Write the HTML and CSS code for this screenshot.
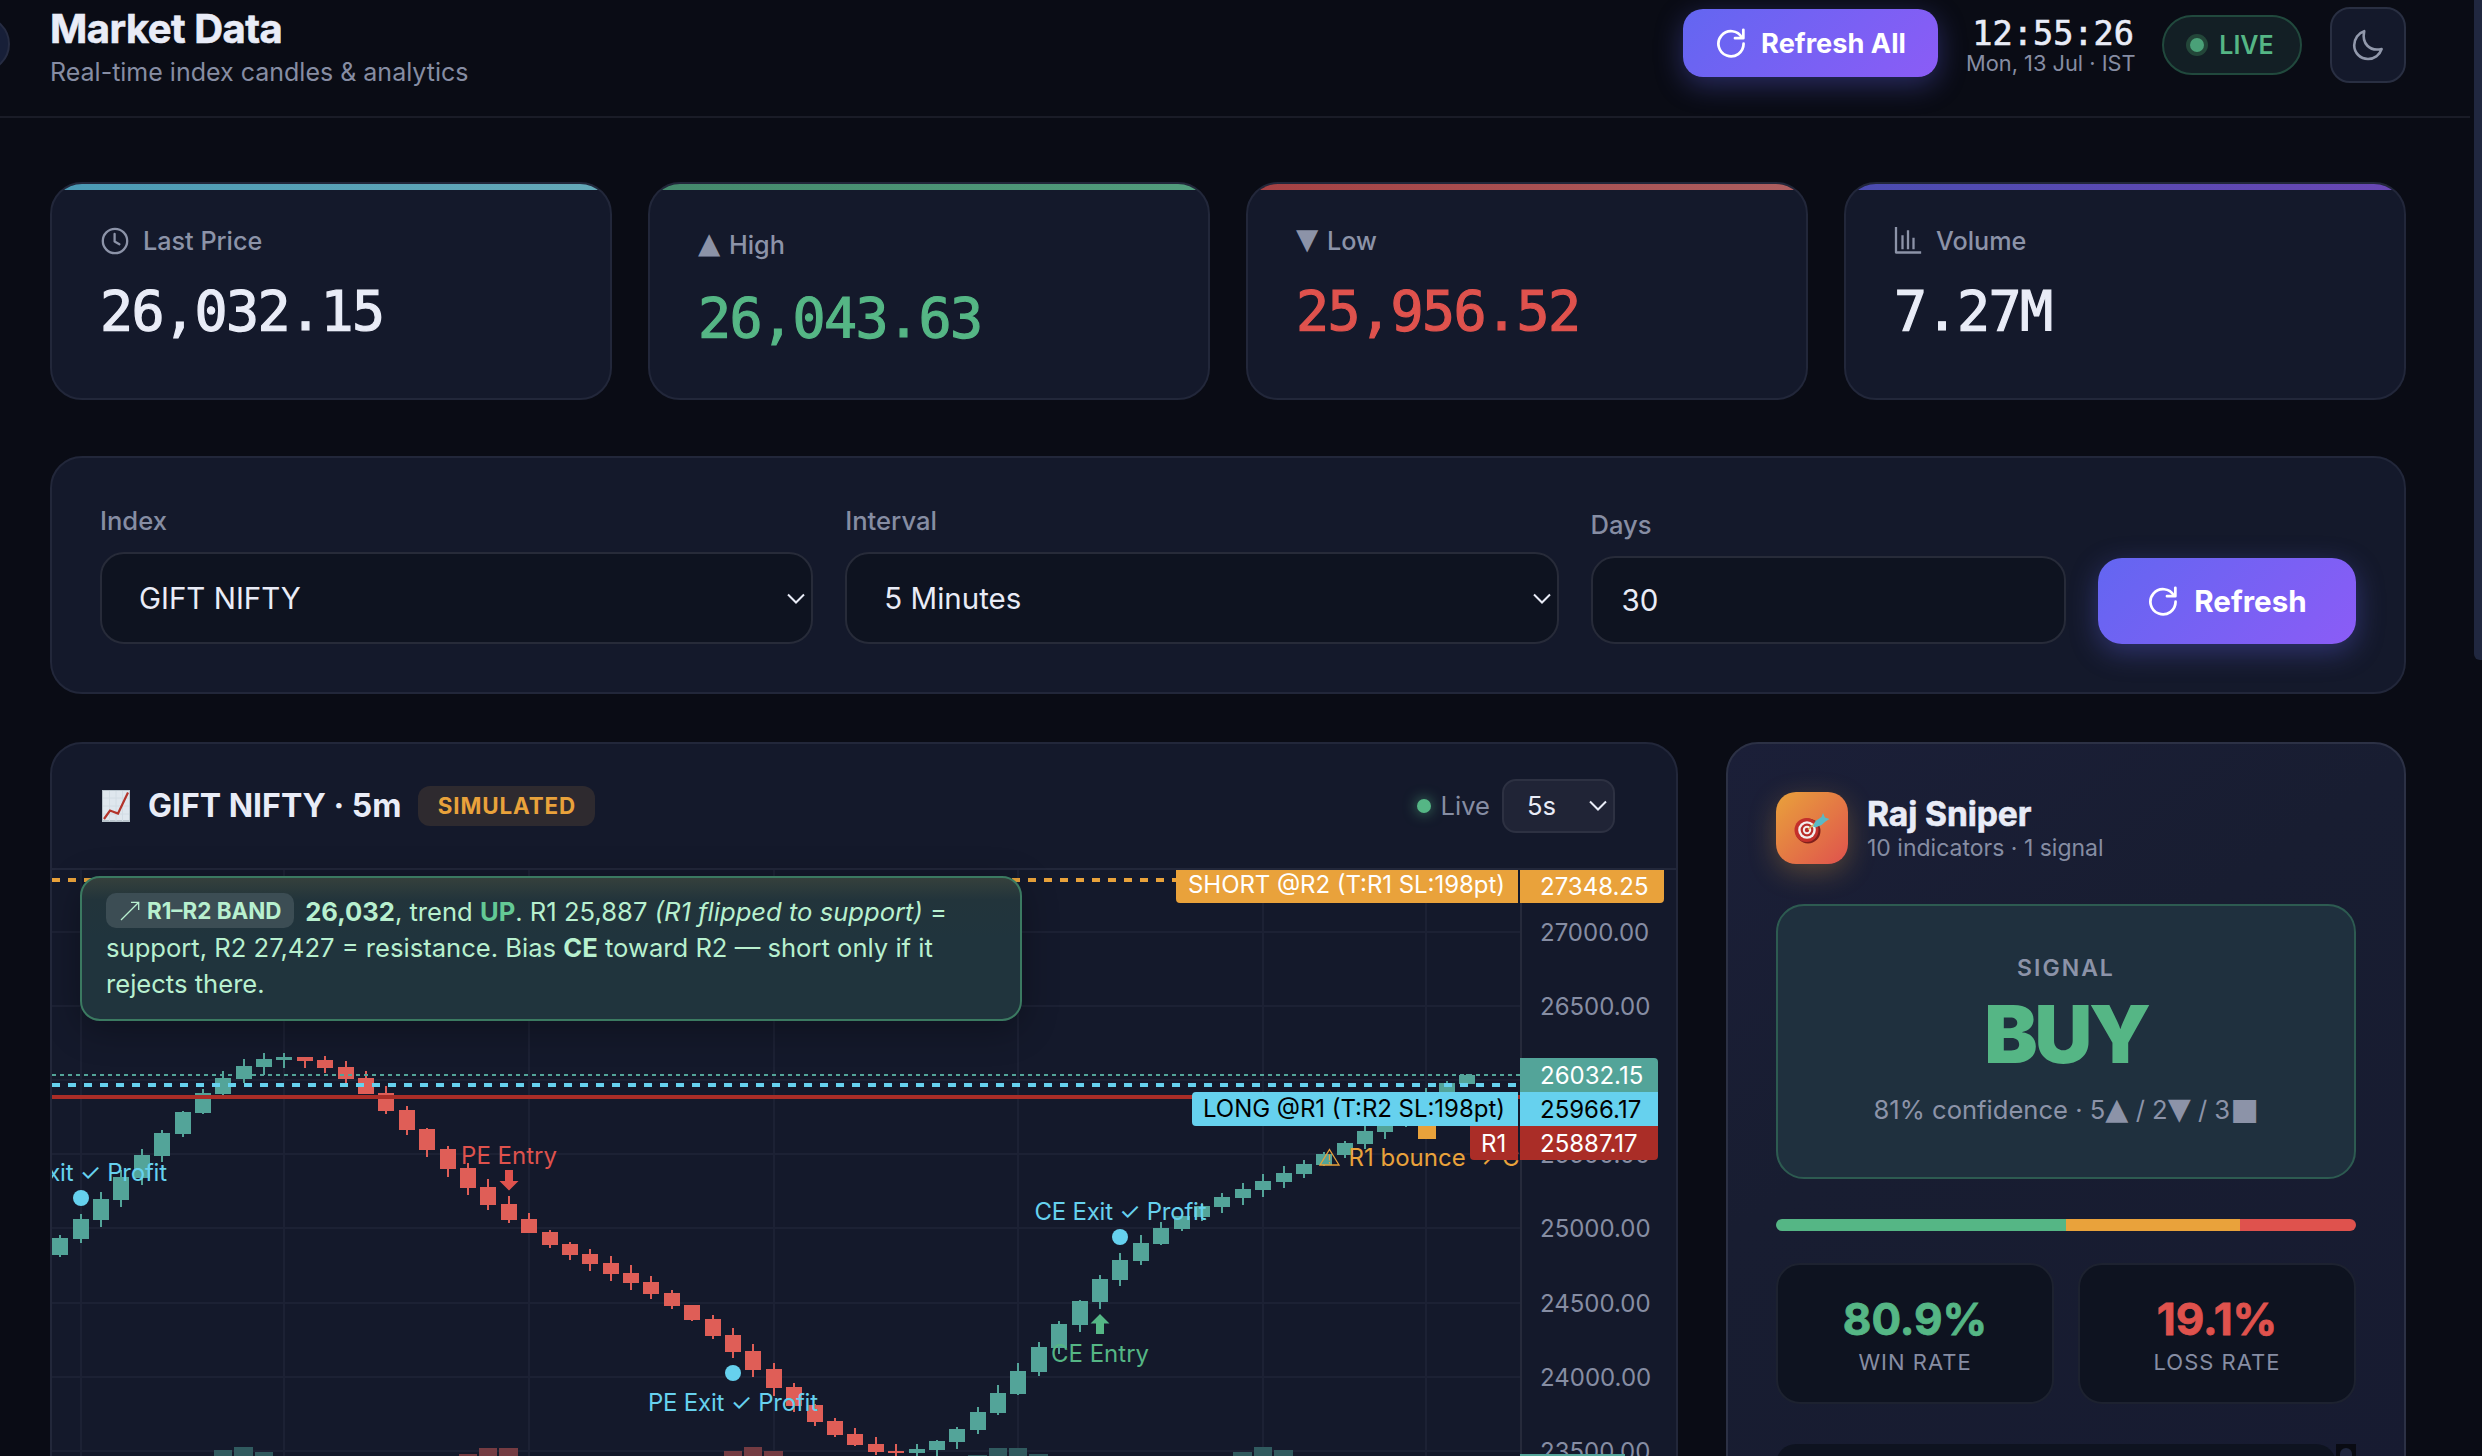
FILE: index.html
```html
<!DOCTYPE html>
<html lang="en">
<head>
  <meta charset="UTF-8" />
  <title>Market Data</title>
  <link rel="stylesheet" href="styles.css">
</head>
<body>
  <button class="sidebar-toggle" aria-label="Toggle sidebar"></button>
  <div class="page-scrollbar"></div>

  <header class="topbar">
    <div class="topbar-title">
      <h1>Market Data</h1>
      <p>Real-time index candles &amp; analytics</p>
    </div>
    <div class="topbar-actions">
      <button class="btn btn-all">
        <svg class="ico" viewBox="0 0 28 28"><path d="M23.6 9.3A11 11 0 1 0 25 14.6"/><path d="M24.8 2.5v7.3h-7.3"/></svg>
        <span>Refresh All</span>
      </button>
      <div class="clock">
        <div class="clock-time">12:55:26</div>
        <div class="clock-date">Mon, 13 Jul · IST</div>
      </div>
      <div class="live-pill"><i></i><span>LIVE</span></div>
      <button class="theme-btn" aria-label="Theme">
        <svg viewBox="0 0 32 32"><path d="M12.2 2.2C9.7 14.5 17.5 22.7 29.6 20C27.5 26.3 22 30 16 30C8.3 30 2.2 24 2.2 16.3C2.2 9.6 6.4 4 12.2 2.2Z"/></svg>
      </button>
    </div>
  </header>

  <main class="content">
    <section class="stats">
      <div class="card stat stat-price">
        <div class="stat-label">
          <svg viewBox="0 0 28 28"><circle cx="14" cy="14" r="12.2"/><path d="M13.6 7v7.6l4.8 2.7"/></svg>
          <span>Last Price</span>
        </div>
        <div class="stat-value">26,032.15</div>
      </div>
      <div class="card stat stat-high">
        <div class="stat-label"><span class="tri">▲</span><span>High</span></div>
        <div class="stat-value">26,043.63</div>
      </div>
      <div class="card stat stat-low">
        <div class="stat-label"><span class="tri">▼</span><span>Low</span></div>
        <div class="stat-value">25,956.52</div>
      </div>
      <div class="card stat stat-volume">
        <div class="stat-label">
          <svg class="bars" viewBox="0 0 28 28"><path d="M2 1v24.5h24"/><path d="M8.5 9.5v11.5M14 4.5v16.5M19.5 12v9"/></svg>
          <span>Volume</span>
        </div>
        <div class="stat-value">7.27M</div>
      </div>
    </section>

    <section class="card filters">
      <div class="field">
        <label>Index</label>
        <div class="control control-select"><span>GIFT NIFTY</span><svg viewBox="0 0 18 11"><path d="M1 1.5l8 8 8-8"/></svg></div>
      </div>
      <div class="field">
        <label>Interval</label>
        <div class="control control-select"><span>5 Minutes</span><svg viewBox="0 0 18 11"><path d="M1 1.5l8 8 8-8"/></svg></div>
      </div>
      <div class="field">
        <label>Days</label>
        <div class="control control-input"><span>30</span></div>
      </div>
      <button class="btn btn-refresh">
        <svg class="ico" viewBox="0 0 28 28"><path d="M23.6 9.3A11 11 0 1 0 25 14.6"/><path d="M24.8 2.5v7.3h-7.3"/></svg>
        <span>Refresh</span>
      </button>
    </section>

    <section class="main-grid">
      <div class="card chart-card">
        <div class="chart-head">
          <div class="chart-title">
            <svg class="chart-emoji" viewBox="0 0 28 32">
              <rect width="28" height="32" fill="#b9c4cc"/>
              <rect x="1" y="1" width="26" height="29" fill="#dfe7ee"/>
              <path d="M7.5 1v30M14 1v30M20.5 1v30M1 8h26M1 16h26M1 24h26" stroke="#d2dce4" fill="none"/>
              <path d="M2 29l6-8.5 8 3 10-21" fill="none" stroke="#b3352c" stroke-width="2.2"/>
            </svg>
            <h2>GIFT NIFTY · 5m</h2>
            <span class="badge-sim">SIMULATED</span>
          </div>
          <div class="chart-live">
            <i></i><span>Live</span>
            <div class="mini-select"><span>5s</span><svg viewBox="0 0 18 11"><path d="M1 1.5l8 8 8-8"/></svg></div>
          </div>
        </div>
        <div class="chart-area">
          <svg class="chart" id="chart" viewBox="52 870 1624 586" width="1624" height="586">
            <defs><clipPath id="pane"><rect x="52" y="870" width="1468" height="586"/></clipPath></defs>
            <g id="grid" class="grid"></g>
            <g clip-path="url(#pane)">
              <g id="volume"></g>
              <g id="candles"></g>
              <path class="line-last" d="M52 1075H1520"/>
              <path class="line-short" d="M52 880H1520"/>
              <path class="line-long" d="M52 1085H1520"/>
              <path class="line-r1" d="M52 1097H1520"/>
              <g class="marks">
                <g class="m-exit">
                  <circle cx="81" cy="1198" r="8"/><text x="81" y="1181" textLength="172">CE Exit ✓ Profit</text>
                  <circle cx="733" cy="1373" r="8"/><text x="733" y="1411" textLength="170">PE Exit ✓ Profit</text>
                  <circle cx="1120" cy="1237" r="8"/><text x="1120.5" y="1220" textLength="172">CE Exit ✓ Profit</text>
                </g>
                <g class="m-pe">
                  <path d="M505 1170h8v11h5.5l-9.5 9.5-9.5-9.5h5.5z"/><text x="509" y="1163.5">PE Entry</text>
                </g>
                <g class="m-ce">
                  <path d="M1096 1334h8v-10.5h5.5l-9.5-9.5-9.5 9.5h5.5z"/><text x="1100" y="1362">CE Entry</text>
                </g>
                <g class="m-warn">
                  <rect x="1418" y="1121" width="18" height="18"/>
                  <path class="warn-sign" d="M1329.5 1149.5L1339 1165H1320ZM1329.5 1154.5v6M1329.5 1162v1.5"/>
                  <text x="1348.5" y="1166">R1 bounce → CE</text>
                </g>
              </g>
            </g>
            <g id="axis" class="axis"></g>
            <g class="tags">
              <path fill="#e9a23b" d="M1518 870v33h-338a4 4 0 0 1-4-4v-29zM1520 870h144v29a4 4 0 0 1-4 4h-140z"/>
              <text x="1188" y="893" textLength="317">SHORT @R2 (T:R1 SL:198pt)</text><text x="1540" y="895">27348.25</text>
              <path fill="#53a499" d="M1520 1058h134a4 4 0 0 1 4 4v30h-138zM1520 1454h105v4h-105z"/>
              <text x="1540" y="1084">26032.15</text>
              <path fill="#66d1ee" d="M1518 1092v34h-322a4 4 0 0 1-4-4v-26a4 4 0 0 1 4-4zM1520 1092h138v34h-138z"/>
              <text class="dark" x="1203" y="1116.5" textLength="302">LONG @R1 (T:R2 SL:198pt)</text><text class="dark" x="1540" y="1118">25966.17</text>
              <path fill="#aa2d27" d="M1518 1126v34h-44a4 4 0 0 1-4-4v-30zM1520 1126h138v30a4 4 0 0 1-4 4h-134z"/>
              <text x="1481" y="1152">R1</text><text x="1540" y="1152">25887.17</text>
            </g>
          </svg>
          <div class="band-note">
            <span class="band-tag"><svg viewBox="0 0 20 20"><path d="M1 19L18.5 1.5M11 1.3h7.7v7.7"/></svg>R1–R2 BAND</span>
            <b>26,032</b>, trend <b class="up">UP</b>. R1 25,887 <em>(R1 flipped to support)</em> =<br>
            support, R2 27,427 = resistance. Bias <b>CE</b> toward R2 — short only if it<br>
            rejects there.
          </div>
        </div>
      </div>

      <aside class="card sniper">
        <div class="sniper-head">
          <div class="sniper-icon">
            <svg viewBox="0 0 36 32">
              <ellipse cx="14" cy="19" rx="12.5" ry="12.5" fill="#7e1f1c"/>
              <ellipse cx="12.5" cy="18" rx="12" ry="12" fill="#c4302b"/>
              <circle cx="13" cy="18" r="8.8" fill="#f3eeee"/>
              <circle cx="13" cy="18" r="6.4" fill="#b92d29"/>
              <circle cx="13" cy="18" r="4.2" fill="#f3eeee"/>
              <circle cx="13" cy="18" r="2.2" fill="#b92d29"/>
              <path d="M14 17.5l8-7" stroke="#d9b15a" stroke-width="1.6"/>
              <path d="M19 14.5l2.5-5.5 6-4 1.5-4 2 4.5 4.5 1.5-4 2.5-4 3.5-6 2.5z" fill="#5bb9c4"/>
            </svg>
          </div>
          <div>
            <h3>Raj Sniper</h3>
            <p>10 indicators · 1 signal</p>
          </div>
        </div>
        <div class="signal">
          <div class="signal-label">SIGNAL</div>
          <div class="signal-value">BUY</div>
          <div class="signal-conf">81% confidence · 5<span>▲</span> / 2<span>▼</span> / 3<span>■</span></div>
        </div>
        <div class="ratio"><i class="r-buy"></i><i class="r-hold"></i><i class="r-sell"></i></div>
        <div class="rates">
          <div class="rate win"><b>80.9%</b><span>WIN RATE</span></div>
          <div class="rate loss"><b>19.1%</b><span>LOSS RATE</span></div>
        </div>
        <div class="indicators"><div class="indicator-row"></div><div class="indicator-scroll"><i></i></div></div>
      </aside>
    </section>
  </main>

  <script src="chart.js"></script>
</body>
</html>
```

FILE: styles.css
```css
* {
  box-sizing: border-box;
}

body {
  margin: 0;
  height: 1456px;
  overflow: hidden;
  background: #0a0c15;
  color: #e9ecf7;
  font-family: Inter, "Liberation Sans", sans-serif;
  font-size: 26px;
  position: relative;
}

h1, h2, h3, p {
  margin: 0;
}

button {
  font-family: inherit;
  border: none;
  padding: 0;
}

svg {
  fill: none;
  display: block;
  flex-shrink: 0;
}

.sidebar-toggle {
  position: absolute;
  left: -46px;
  top: 16px;
  width: 56px;
  height: 56px;
  border-radius: 50%;
  background: #171f38;
  border: 2px solid #262c42;
}

.page-scrollbar {
  position: absolute;
  right: 0;
  top: 0;
  width: 8px;
  height: 660px;
  background: #20273f;
  border-radius: 0 0 0 6px;
}

/* top bar */
.topbar {
  width: 2470px;
  height: 118px;
  padding: 0 64px 26px 50px;
  border-bottom: 2px solid #1a1c27;
  display: flex;
  justify-content: space-between;
  align-items: center;
}

.topbar-title {
  padding-top: 5px;
}

.topbar-title h1 {
  font-size: 40px;
  line-height: 48px;
  font-weight: 700;
  letter-spacing: -0.5px;
  -webkit-text-stroke: 0.6px;
}

.topbar-title p {
  font-size: 25px;
  line-height: 38px;
  color: #868da3;
}

.topbar-actions {
  display: flex;
  align-items: center;
  gap: 28px;
}

.btn {
  display: flex;
  align-items: center;
  justify-content: center;
  gap: 14px;
  color: #fff;
  font-weight: 700;
  background: linear-gradient(135deg, #6366f1, #8b5cf6);
  box-shadow: 0 8px 28px rgba(99, 102, 241, 0.35);
}

.btn .ico {
  width: 32px;
  height: 32px;
  stroke: #fff;
  stroke-width: 2.4;
  stroke-linecap: round;
  stroke-linejoin: round;
}

.btn-all {
  width: 255px;
  height: 68px;
  margin-bottom: 4px;
  border-radius: 20px;
  font-size: 27.2px;
}

.clock {
  width: 168px;
  padding-top: 3px;
  text-align: right;
  white-space: nowrap;
}

.clock-time {
  font-family: "DejaVu Sans Mono", monospace;
  font-size: 33.6px;
  line-height: 34px;
  -webkit-text-stroke: 0.6px #e9ecf7;
}

.clock-date {
  font-size: 21.8px;
  line-height: 25px;
  color: #868da3;
}

.live-pill {
  width: 140px;
  height: 60px;
  border-radius: 30px;
  border: 2px solid #21493d;
  background: #131f25;
  color: #55b685;
  font-size: 25px;
  font-weight: 600;
  display: flex;
  align-items: center;
  justify-content: center;
  gap: 15px;
}

.live-pill i {
  width: 14px;
  height: 14px;
  border-radius: 50%;
  background: #4aa178;
  box-shadow: 0 0 0 4px #234639;
}

.theme-btn {
  width: 76px;
  height: 76px;
  border-radius: 20px;
  border: 2px solid #292f42;
  background: #14192b;
  display: flex;
  align-items: center;
  justify-content: center;
}

.theme-btn svg {
  width: 32px;
  height: 32px;
  stroke: #9198ab;
  stroke-width: 2.6;
  stroke-linejoin: round;
}

/* cards */
.content {
  width: 2356px;
  margin-left: 50px;
  padding-top: 64px;
}

.card {
  background: #14192b;
  border: 2px solid #22273a;
  border-radius: 32px;
  overflow: hidden;
}

.stats {
  display: grid;
  grid-template-columns: repeat(4, 1fr);
  gap: 36px;
}

.stat {
  height: 218px;
  padding: 0 48px;
}

.stat::before {
  content: "";
  display: block;
  height: 6px;
  margin: 0 -48px 36px;
}

.stat-price::before { background: linear-gradient(90deg, #4a9ab5, #65a9b8); }
.stat-high::before { background: linear-gradient(90deg, #44896c, #529d7d); }
.stat-low::before { background: linear-gradient(90deg, #a54143, #ad5f60); }
.stat-volume::before { background: linear-gradient(90deg, #4a4cb0, #6947b4); }

.stat-label {
  display: flex;
  align-items: center;
  gap: 14px;
  height: 30px;
  font-weight: 500;
  font-size: 25.2px;
  color: #8c93a8;
}

.stat-label svg {
  width: 28px;
  height: 28px;
  margin-left: 1px;
  stroke: #8c93a8;
  stroke-width: 2.3;
  stroke-linecap: round;
  stroke-linejoin: round;
}

.stat-label .bars {
  stroke-linecap: square;
  margin-left: 0;
}

.stat-label .tri {
  font-family: "DejaVu Sans", sans-serif;
  font-size: 29px;
  line-height: 26px;
  height: 30px;
  width: 17px;
}

.stat-high::before {
  margin-bottom: 40px;
}

.stat-value {
  margin-top: 26px;
  font-family: "DejaVu Sans Mono", monospace;
  font-size: 55px;
  line-height: 59px;
  letter-spacing: -1.6px;
  -webkit-text-stroke: 1.2px;
}

.stat-high .stat-value {
  margin-top: 29px;
  color: #55b685;
}

.stat-low .stat-value {
  color: #df524d;
}

/* filters */
.filters {
  margin-top: 56px;
  height: 238px;
  padding: 0 48px 48px;
  display: grid;
  grid-template-columns: 1.5fr 1.5fr 1fr 258px;
  gap: 32px;
  align-items: end;
}

.field label {
  display: block;
  font-size: 25.6px;
  line-height: 32px;
  font-weight: 500;
  color: #868da3;
  margin-bottom: 15px;
}

.control {
  height: 92px;
  border: 2px solid #272b39;
  border-radius: 24px;
  background: #0e1320;
  display: flex;
  align-items: center;
  justify-content: space-between;
  font-size: 29.5px;
}

.control-select {
  padding: 0 6px 0 37px;
}

.control-input {
  height: 88px;
  padding: 0 29px;
}

.control svg,
.mini-select svg {
  width: 18px;
  height: 11px;
  stroke: #e9ecf7;
  stroke-width: 2;
}

.btn-refresh {
  height: 86px;
  border-radius: 24px;
  font-size: 29.6px;
  gap: 15px;
}

/* chart */
.main-grid {
  margin-top: 48px;
  display: grid;
  grid-template-columns: 1628px 680px;
  gap: 48px;
}

.chart-card {
  height: 760px;
}

.chart-head {
  height: 126px;
  padding: 0 61px 1px 50px;
  border-bottom: 2px solid #22273a;
  display: flex;
  justify-content: space-between;
  align-items: center;
}

.chart-title,
.chart-live {
  display: flex;
  align-items: center;
}

.chart-emoji {
  width: 28px;
  height: 32px;
}

.chart-title h2 {
  margin-left: 18px;
  font-size: 32px;
  font-weight: 700;
}

.badge-sim {
  margin-left: 17px;
  width: 177px;
  height: 40px;
  border-radius: 12px;
  background: #2e2a2f;
  color: #e9a23b;
  font-size: 22.4px;
  line-height: 40px;
  font-weight: 700;
  letter-spacing: 0.9px;
  text-align: center;
}

.chart-live {
  color: #868da3;
  font-size: 25.6px;
}

.chart-live i {
  width: 14px;
  height: 14px;
  border-radius: 50%;
  background: #55b685;
  box-shadow: 0 0 14px rgba(85, 182, 133, 0.7);
  margin-right: 10px;
}

.mini-select {
  margin-left: 12px;
  width: 113px;
  height: 54px;
  border: 2px solid #2d3142;
  border-radius: 14px;
  background: #202436;
  color: #e9ecf7;
  padding: 0 6px 0 23px;
  display: flex;
  align-items: center;
  justify-content: space-between;
}

.chart-area {
  position: relative;
}

.grid path {
  stroke: #1c2134;
  stroke-width: 2;
}

.chart text {
  font-size: 24px;
  font-family: Inter, "DejaVu Sans", sans-serif;
}

.line-last {
  stroke: #53a499;
  stroke-width: 2;
  stroke-dasharray: 4 4;
}

.line-short,
.line-long,
.line-r1 {
  stroke-width: 4;
  stroke-dasharray: 8 8;
}

.line-short { stroke: #e9a23b; }
.line-long { stroke: #66d1ee; }
.line-r1 { stroke: #aa2d27; stroke-dasharray: none; }

.bull { fill: #53a499; }
.bear { fill: #df5e57; }
.vol-bull { fill: #305a5f; }
.vol-bear { fill: #743b42; }

.marks text {
  text-anchor: middle;
}

.m-exit { fill: #66d1ee; }
.m-pe { fill: #df524d; }
.m-ce { fill: #55b685; }
.m-warn { fill: #e9a23b; }

.marks .m-warn text {
  text-anchor: start;
}

.warn-sign {
  fill: none;
  stroke: #e9a23b;
  stroke-width: 1.3;
}

.axis text {
  fill: #868da3;
}

.axis path {
  stroke: #262a3b;
  stroke-width: 2;
}

.tags text {
  fill: #fff;
}

.tags .dark {
  fill: #000;
}

.band-note {
  position: absolute;
  left: 28px;
  top: 6px;
  width: 942px;
  height: 145px;
  padding: 15px 24px 0;
  border: 2px solid #3b7a61;
  border-radius: 20px;
  background: linear-gradient(#35403c, #22343b 22px, #20343d 60px);
  box-shadow: 0 8px 36px rgba(0, 0, 0, 0.3);
  color: #b8f0cf;
  font-size: 25.6px;
  line-height: 36px;
  white-space: nowrap;
}

.band-note .up {
  color: #64c995;
}

.band-tag {
  display: inline-flex;
  align-items: center;
  gap: 7px;
  width: 188px;
  height: 35px;
  margin-right: 4px;
  padding-left: 14px;
  border-radius: 10px;
  background: #3c4d54;
  font-size: 22.4px;
  font-weight: 700;
}

.band-tag svg {
  width: 20px;
  height: 20px;
  stroke: #b8f0cf;
  stroke-width: 1.3;
}

/* signal panel */
.sniper {
  height: 760px;
  padding: 48px;
  border-color: #2c3145;
  background: linear-gradient(145deg, #1b1f38, #181d31 40%, #171b31);
}

.sniper-head {
  display: flex;
  align-items: center;
  gap: 19px;
  height: 72px;
}

.sniper-icon {
  width: 72px;
  height: 72px;
  border-radius: 20px;
  background: linear-gradient(135deg, #e9a23b, #df524d);
  box-shadow: 0 8px 28px rgba(233, 162, 59, 0.3);
  display: flex;
  align-items: center;
  justify-content: center;
}

.sniper-icon svg {
  width: 36px;
  height: 32px;
}

.sniper-head h3 {
  padding-top: 1px;
  font-size: 33.6px;
  line-height: 39px;
  font-weight: 700;
  letter-spacing: -0.1px;
  -webkit-text-stroke: 0.6px;
}

.sniper-head p {
  font-size: 23px;
  line-height: 30px;
  color: #868da3;
}

.signal {
  margin-top: 40px;
  height: 275px;
  border: 2px solid #2d5b51;
  border-radius: 28px;
  background: #1f303e;
  text-align: center;
  padding-top: 47px;
}

.signal-label {
  font-size: 23px;
  line-height: 30px;
  font-weight: 600;
  letter-spacing: 2px;
  color: #8c93a8;
}

.signal-value {
  margin-top: 2px;
  font-size: 80px;
  line-height: 98px;
  font-weight: 900;
  letter-spacing: -3.2px;
  color: #55b685;
}

.signal-conf {
  margin-top: 9px;
  font-size: 25.6px;
  line-height: 36px;
  color: #8c93a8;
}

.signal-conf span {
  font-family: "DejaVu Sans", sans-serif;
  font-size: 30px;
  line-height: 30px;
}

.ratio {
  margin-top: 40px;
  height: 12px;
  border-radius: 6px;
  overflow: hidden;
  display: flex;
}

.r-buy { flex: 5; background: #55b685; }
.r-hold { flex: 3; background: #e9a23b; }
.r-sell { flex: 2; background: #df524d; }

.rates {
  margin-top: 32px;
  display: grid;
  grid-template-columns: 1fr 1fr;
  gap: 24px;
}

.rate {
  height: 141px;
  border: 2px solid #1d2230;
  border-radius: 24px;
  background: #0e1320;
  text-align: center;
  padding-top: 28px;
}

.rate b,
.rate span {
  display: block;
}

.rate b {
  font-size: 44px;
  line-height: 52px;
  font-weight: 700;
  -webkit-text-stroke: 0.8px;
}

.rate span {
  margin-top: 2px;
  font-size: 22px;
  line-height: 30px;
  letter-spacing: 1px;
  color: #868da3;
}

.win b { color: #55b685; }
.loss b { color: #df524d; }

.indicators {
  margin-top: 40px;
  height: 400px;
  display: flex;
}

.indicator-row {
  flex: 1;
  border-radius: 20px;
  background: #0e1320;
}

.indicator-scroll {
  width: 20px;
  background: #090b13;
  padding: 4px;
}

.indicator-scroll i {
  display: block;
  height: 200px;
  border-radius: 6px;
  background: #20273f;
}
```

FILE: chart.js
```js
// [x, body top, body bottom, wick top, wick bottom, rising]
const candles = [
  [60,1238,1255,1235,1257,1],[81,1219,1239,1214,1243,1],[101,1199,1220,1192,1227,1],[121,1177,1200,1170,1207,1],
  [142,1155,1178,1149,1185,1],[162,1133,1156,1130,1162,1],[183,1112,1134,1111,1137,1],[203,1093,1113,1089,1114,1],
  [223,1078,1094,1071,1095,1],[244,1066,1079,1059,1083,1],[264,1059,1067,1053,1075,1],[284,1057,1060,1053,1068,1],
  [305,1057,1061,1057,1068,0],[325,1060,1068,1056,1073,0],[346,1067,1079,1061,1084,0],[366,1078,1094,1071,1094,0],
  [386,1093,1111,1086,1114,0],[407,1110,1130,1106,1135,0],[427,1129,1150,1128,1157,0],[448,1149,1169,1146,1177,0],
  [468,1168,1188,1163,1195,0],[488,1187,1205,1179,1210,0],[509,1204,1220,1196,1223,0],[529,1219,1233,1213,1233,0],
  [550,1232,1245,1230,1248,0],[570,1244,1255,1242,1260,0],[590,1254,1264,1249,1271,0],[611,1263,1274,1256,1281,0],
  [631,1273,1283,1265,1290,0],[651,1282,1294,1276,1299,0],[672,1293,1306,1290,1309,0],[692,1305,1320,1305,1321,0],
  [713,1319,1336,1315,1339,0],[733,1335,1352,1328,1358,0],[753,1351,1370,1344,1377,0],[774,1369,1388,1363,1396,0],
  [794,1387,1406,1383,1412,0],[815,1405,1422,1404,1426,0],[835,1421,1435,1418,1437,0],[855,1434,1445,1428,1446,0],
  [876,1444,1452,1437,1455,0],[896,1451,1453,1444,1457,0],[917,1449,1453,1444,1457,1],[937,1441,1450,1440,1457,1],
  [957,1429,1442,1427,1449,1],[978,1412,1430,1407,1434,1],[998,1393,1413,1385,1415,1],[1018,1371,1394,1363,1395,1],
  [1039,1347,1372,1342,1376,1],[1059,1324,1348,1321,1354,1],[1080,1301,1325,1300,1332,1],[1100,1279,1302,1275,1309,1],
  [1120,1260,1280,1253,1286,1],[1141,1243,1261,1235,1265,1],[1161,1228,1244,1222,1245,1],[1182,1216,1229,1216,1231,1],
  [1202,1206,1217,1203,1221,1],[1222,1197,1207,1193,1213,1],[1243,1189,1198,1183,1205,1],[1263,1181,1190,1174,1197,1],
  [1284,1173,1182,1166,1188,1],[1304,1164,1174,1160,1178,1],[1324,1154,1165,1152,1166,1],[1345,1143,1155,1141,1158,1],
  [1365,1131,1144,1124,1149,1],[1385,1118,1132,1115,1139,1],[1406,1106,1119,1102,1127,1],[1426,1094,1107,1088,1110,1],
  [1447,1083,1095,1081,1096,1],[1467,1075,1084,1074,1084,1]
];

// [x, width, top, rising]
const volume = [
  [214,18,1450,1],[234,19,1447,1],[255,18,1452,1],
  [459,18,1454,0],[479,18,1448,0],[499,19,1448,0],
  [724,18,1451,0],[744,18,1447,0],[764,19,1451,0],
  [968,19,1455,1],[989,18,1448,1],[1009,18,1448,1],[1029,19,1454,1],
  [1233,19,1452,1],[1254,18,1447,1],[1274,19,1450,1]
];

const vLines = [81, 284, 529, 774, 1018, 1263, 1426];
const hLines = [[932, 27000], [1006, 26500], [1080, 26000], [1154, 25500], [1228, 25000], [1303, 24500], [1377, 24000], [1451, 23500]];

function rect(x, y, w, h, cls) {
  return `<rect x="${x}" y="${y}" width="${w}" height="${h}" class="${cls}"/>`;
}

document.getElementById("grid").innerHTML =
  vLines.map(x => `<path d="M${x} 870V1456"/>`).join("") +
  hLines.map(([y]) => `<path d="M52 ${y}H1520"/>`).join("");

document.getElementById("volume").innerHTML =
  volume.map(([x, w, y, up]) => rect(x, y, w, 1456 - y, up ? "vol-bull" : "vol-bear")).join("");

document.getElementById("candles").innerHTML =
  candles.map(([x, t, b, wt, wb, up]) => {
    const cls = up ? "bull" : "bear";
    return rect(x - 1, wt, 2, wb - wt, cls) + rect(x - 8, t, 16, b - t, cls);
  }).join("");

// 26000 sits under the last price tags, so its label is skipped
document.getElementById("axis").innerHTML =
  `<path d="M1521 870V1456"/>` +
  hLines.filter(([, p]) => p !== 26000)
    .map(([y, p]) => `<text x="1540" y="${y + 8.5}">${p}.00</text>`).join("");
```
